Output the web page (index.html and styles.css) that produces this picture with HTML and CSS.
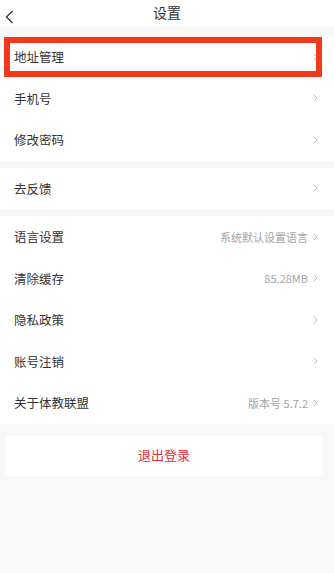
FILE: index.html
```html
<!DOCTYPE html>
<html lang="zh-CN">
<head>
    <meta charset="UTF-8">
    <meta name="viewport" content="width=device-width, initial-scale=1.0">
    <title>设置</title>
    <link rel="stylesheet" href="styles.css">
</head>
<body>
    <div class="header">
        <span class="back">
            <svg width="9" height="14" viewBox="0 0 9 14"><path d="M7.5 1 L1.5 7 L7.5 13" fill="none" stroke="#333" stroke-width="1.3"/></svg>
        </span>
        <div class="title">设置</div>
    </div>

    <div class="group group-first">
        <div class="row highlight">
            <span class="label">地址管理</span>
            <svg class="arrow" width="5" height="8" viewBox="0 0 5 8"><path d="M0.8 0.8 L4 4 L0.8 7.2" fill="none" stroke="#b5b5b5" stroke-width="0.9"/></svg>
        </div>
        <div class="row">
            <span class="label">手机号</span>
            <svg class="arrow" width="5" height="8" viewBox="0 0 5 8"><path d="M0.8 0.8 L4 4 L0.8 7.2" fill="none" stroke="#b5b5b5" stroke-width="0.9"/></svg>
        </div>
        <div class="row">
            <span class="label">修改密码</span>
            <svg class="arrow" width="5" height="8" viewBox="0 0 5 8"><path d="M0.8 0.8 L4 4 L0.8 7.2" fill="none" stroke="#b5b5b5" stroke-width="0.9"/></svg>
        </div>
    </div>

    <div class="group">
        <div class="row">
            <span class="label">去反馈</span>
            <svg class="arrow" width="5" height="8" viewBox="0 0 5 8"><path d="M0.8 0.8 L4 4 L0.8 7.2" fill="none" stroke="#b5b5b5" stroke-width="0.9"/></svg>
        </div>
    </div>

    <div class="group">
        <div class="row">
            <span class="label">语言设置</span>
            <span class="value">系统默认设置语言</span>
            <svg class="arrow" width="5" height="8" viewBox="0 0 5 8"><path d="M0.8 0.8 L4 4 L0.8 7.2" fill="none" stroke="#b5b5b5" stroke-width="0.9"/></svg>
        </div>
        <div class="row">
            <span class="label">清除缓存</span>
            <span class="value">85.28MB</span>
            <svg class="arrow" width="5" height="8" viewBox="0 0 5 8"><path d="M0.8 0.8 L4 4 L0.8 7.2" fill="none" stroke="#b5b5b5" stroke-width="0.9"/></svg>
        </div>
        <div class="row">
            <span class="label">隐私政策</span>
            <svg class="arrow" width="5" height="8" viewBox="0 0 5 8"><path d="M0.8 0.8 L4 4 L0.8 7.2" fill="none" stroke="#b5b5b5" stroke-width="0.9"/></svg>
        </div>
        <div class="row">
            <span class="label">账号注销</span>
            <svg class="arrow" width="5" height="8" viewBox="0 0 5 8"><path d="M0.8 0.8 L4 4 L0.8 7.2" fill="none" stroke="#b5b5b5" stroke-width="0.9"/></svg>
        </div>
        <div class="row">
            <span class="label">关于体教联盟</span>
            <span class="value">版本号 5.7.2</span>
            <svg class="arrow" width="5" height="8" viewBox="0 0 5 8"><path d="M0.8 0.8 L4 4 L0.8 7.2" fill="none" stroke="#b5b5b5" stroke-width="0.9"/></svg>
        </div>
    </div>

    <div class="logout">退出登录</div>
</body>
</html>
```

FILE: styles.css
```css
body {
    margin: 0;
    padding: 0;
    background-color: #f8f8f8;
    font-family: "Noto Sans CJK SC", "Noto Sans", sans-serif;
    color: #333;
}

.header {
    position: relative;
    height: 27px;
    background-color: #fff;
    display: flex;
    align-items: center;
    justify-content: center;
}

.back {
    position: absolute;
    left: 5px;
    top: 5px;
}

.title {
    font-size: 14px;
    color: #333;
    margin-bottom: 3px;
}

.group {
    background-color: #fff;
    margin-top: 7px;
}

.group-first {
    margin-top: 9px;
}

.row {
    position: relative;
    height: 41.5px;
    display: flex;
    align-items: center;
    padding: 0 16px 0 14px;
    font-size: 12.5px;
}

.label {
    flex: 1;
}

.value {
    font-size: 11px;
    color: #a3a3a3;
    margin-right: 5px;
}

.arrow {
    display: block;
}

.highlight::after {
    content: "";
    position: absolute;
    left: 4px;
    top: 1px;
    right: 12px;
    bottom: 1px;
    border: 6px solid #f2391c;
}

.logout {
    margin: 12px 11px 0 5px;
    height: 40px;
    padding-bottom: 3px;
    box-sizing: border-box;
    background-color: #fff;
    border-radius: 5px;
    display: flex;
    align-items: center;
    justify-content: center;
    font-size: 13px;
    color: #e0303c;
}
```
